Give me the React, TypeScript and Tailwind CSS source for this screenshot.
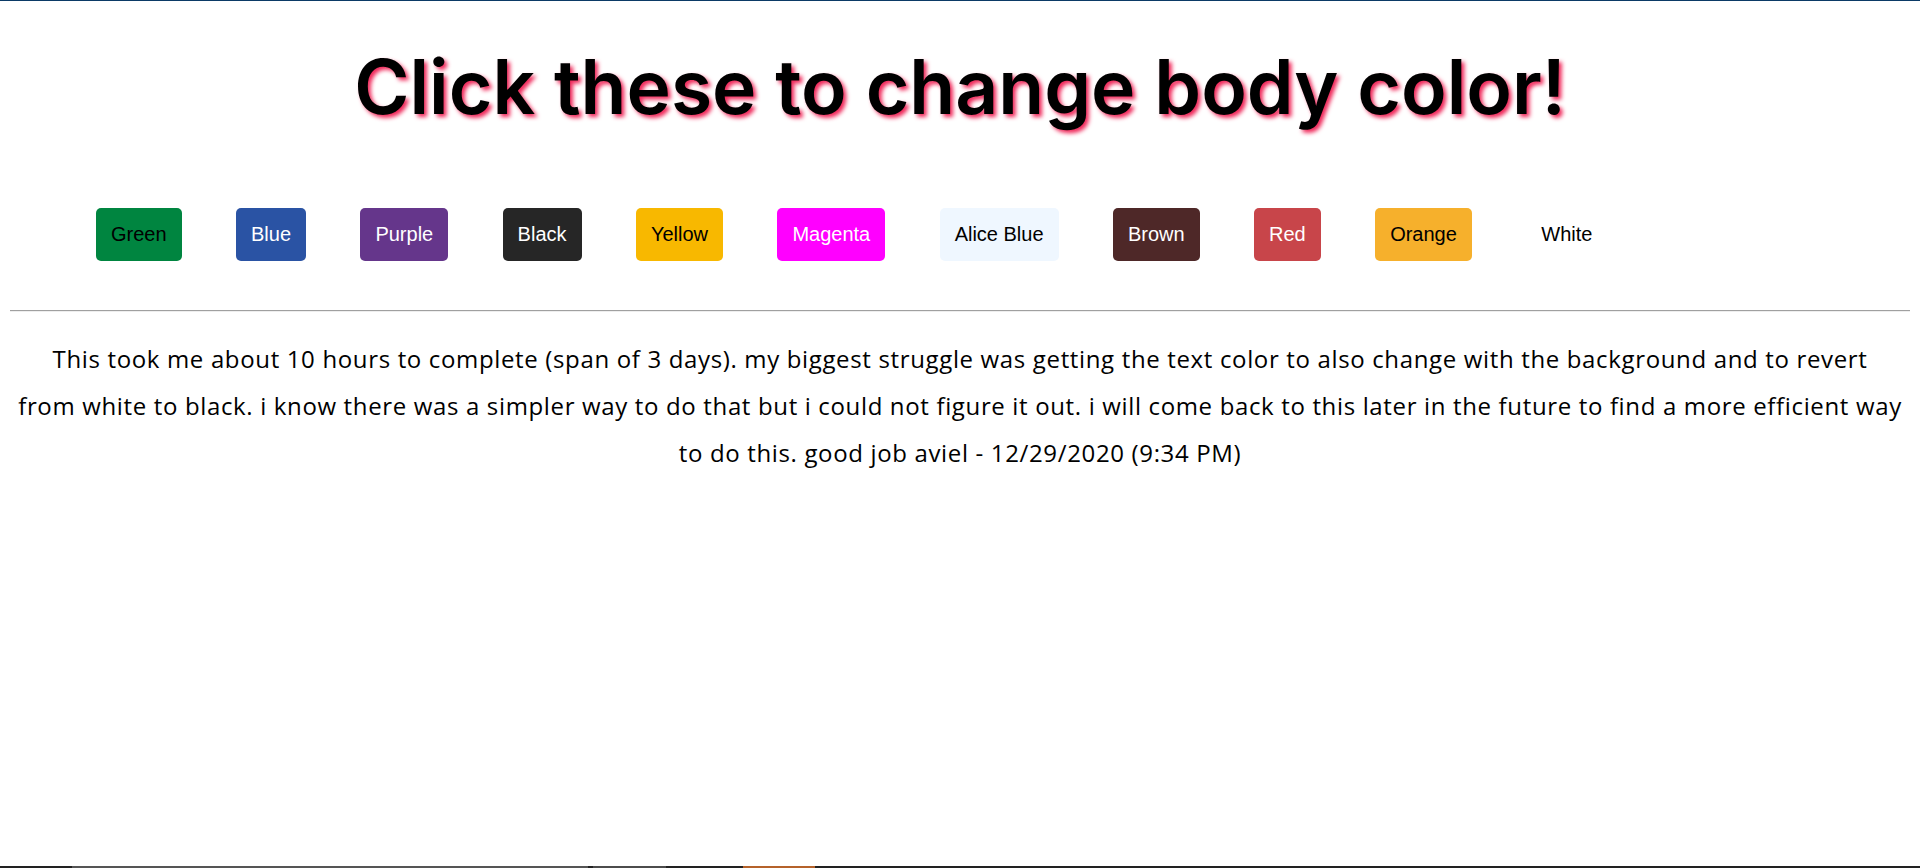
import React from "react";

const buttons: { label: string; cls: string }[] = [
  { label: "Green", cls: "bg-[#008540] text-black" },
  { label: "Blue", cls: "bg-[#2a53a4] text-white" },
  { label: "Purple", cls: "bg-[#65368b] text-white" },
  { label: "Black", cls: "bg-[#262626] text-white" },
  { label: "Yellow", cls: "bg-[#f8b800] text-black" },
  { label: "Magenta", cls: "bg-[#ff00ff] text-white" },
  { label: "Alice Blue", cls: "bg-[#eff7ff] text-black" },
  { label: "Brown", cls: "bg-[#4e2828] text-white" },
  { label: "Red", cls: "bg-[#c8454a] text-white" },
  { label: "Orange", cls: "bg-[#f6b02c] text-black" },
  { label: "White", cls: "bg-white text-black" },
];

export default function App() {
  return (
    <div className="relative w-[1920px] h-[868px] overflow-hidden bg-white flex flex-col">
      <div className="h-px w-full bg-[#0b3a66]" />
      <h1
        className="mt-[44px] text-center text-[75px] leading-[84px] font-semibold text-black"
        style={{ fontFamily: "Inter, 'Noto Sans', sans-serif", textShadow: "3px 3px 4px #f0285a" }}
      >
        Click these to change body color!
      </h1>
      <div className="mt-[79px] flex gap-[54.4px] pl-[96px]">
        {buttons.map((b) => (
          <button
            key={b.label}
            className={`px-[15px] py-[15px] text-[20px] leading-[23px] rounded-[5px] ${b.cls}`}
            style={{ fontFamily: "'Liberation Sans', Arial, sans-serif" }}
          >
            {b.label}
          </button>
        ))}
      </div>
      <div className="mt-[49px] mx-[10px] h-[2px] border-t border-t-[#a0a0a0] border-b border-b-[#eeeeee]" />
      <p
        className="mt-[23px] mx-[8px] text-center text-[24px] leading-[47px] tracking-[0.65px] text-black"
        style={{ fontFamily: "'Open Sans', sans-serif" }}
      >
        This took me about 10 hours to complete (span of 3 days). my biggest struggle was getting the text color to also change with the background and to revert
        <br />
        from white to black. i know there was a simpler way to do that but i could not figure it out. i will come back to this later in the future to find a more efficient way
        <br />
        to do this. good job aviel - 12/29/2020 (9:34 PM)
      </p>
      <div className="absolute bottom-0 left-0 w-full h-[2px] flex">
        <div className="w-[72px] bg-[#222222]" />
        <div className="w-[516px] bg-[#555555]" />
        <div className="w-[5px] bg-[#222222]" />
        <div className="w-[73px] bg-[#4c4c4c]" />
        <div className="w-[77px] bg-[#222222]" />
        <div className="w-[72px] bg-[#b5622a]" />
        <div className="flex-1 bg-[#222222]" />
      </div>
    </div>
  );
}
